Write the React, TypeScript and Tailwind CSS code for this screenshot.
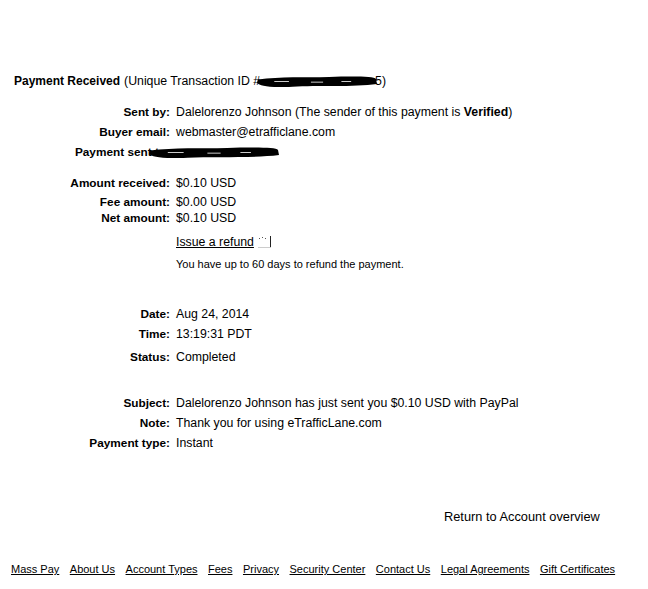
import React from 'react';

// black marker strokes that hide private data
const Scribble: React.FC<{ w: number; h: number; className?: string }> = ({ w, h, className }) => (
  <svg width={w} height={h} viewBox={`0 0 ${w} ${h}`} className={className}>
    <path
      d={`M2 ${h * 0.35} C ${w * 0.2} ${h * 0.1}, ${w * 0.4} ${h * 0.2}, ${w * 0.6} ${h * 0.15} S ${w - 4} ${h * 0.1}, ${w - 2} ${h * 0.3} L ${w - 1} ${h * 0.7} C ${w * 0.8} ${h * 0.95}, ${w * 0.5} ${h * 0.8}, ${w * 0.3} ${h * 0.9} S 4 ${h * 0.85}, 1 ${h * 0.6} Z`}
      fill="#000"
    />
    <path d={`M${w * 0.15} ${h * 0.5} h${w * 0.12} M${w * 0.45} ${h * 0.55} h${w * 0.1} M${w * 0.7} ${h * 0.5} h${w * 0.08}`} stroke="#fff" strokeWidth="0.8" />
  </svg>
);

const Row: React.FC<{ label: string; className?: string; children?: React.ReactNode }> = ({ label, className = '', children }) => (
  <div className={`flex h-[16px] leading-[16px] ${className}`}>
    <div className="w-[170px] shrink-0 text-right font-bold text-[11.8px]">{label}</div>
    <div className="pl-[6px] whitespace-nowrap">{children}</div>
  </div>
);

const links = ['Mass Pay', 'About Us', 'Account Types', 'Fees', 'Privacy', 'Security Center', 'Contact Us', 'Legal Agreements', 'Gift Certificates'];

export default function App() {
  return (
    <div className="w-[648px] h-[589px] bg-white text-black text-[12.3px] overflow-hidden" style={{ fontFamily: '"Liberation Sans", Arial, sans-serif' }}>
      <div className="pt-[73px]">
        {/* heading */}
        <div className="h-[16px] leading-[16px] pl-[14px] whitespace-nowrap flex items-center">
          <span className="font-bold text-[12px]">Payment Received</span>
          <span className="ml-[4px]">(Unique Transaction ID #</span>
          <Scribble w={122} h={13} className="-ml-[4px] shrink-0" />
          <span className="-ml-[3px]">5)</span>
        </div>

        <Row label="Sent by:" className="mt-[15px]">
          Dalelorenzo Johnson (The sender of this payment is <span className="font-bold">Verified</span>)
        </Row>
        <Row label="Buyer email:" className="mt-[4px]">webmaster@etrafficlane.com</Row>
        <div className="relative mt-[4px]">
          <Row label="Payment sent to:" />
          <Scribble w={132} h={13} className="absolute left-[148px] top-[2px]" />
        </div>

        <Row label="Amount received:" className="mt-[15px]">$0.10 USD</Row>
        <Row label="Fee amount:" className="mt-[3px]">$0.00 USD</Row>
        <Row label="Net amount:">$0.10 USD</Row>

        <div className="mt-[8px] h-[16px] leading-[16px] pl-[176px] flex items-center">
          <span className="underline">Issue a refund</span>
          <svg width="14" height="14" viewBox="0 0 14 14" className="ml-[4px]">
            <rect x="1" y="3" width="1" height="1" fill="#555" />
            <rect x="4" y="2" width="1" height="1" fill="#555" />
            <rect x="7" y="3" width="1" height="1" fill="#555" />
            <rect x="12" y="1" width="1" height="12" fill="#222" />
            <rect x="0" y="12" width="13" height="1" fill="#ccc" />
          </svg>
        </div>
        <div className="mt-[6px] h-[16px] leading-[16px] pl-[176px] text-[11px]">You have up to 60 days to refund the payment.</div>

        <Row label="Date:" className="mt-[34px]">Aug 24, 2014</Row>
        <Row label="Time:" className="mt-[4px]">13:19:31 PDT</Row>
        <Row label="Status:" className="mt-[7px]">Completed</Row>

        <Row label="Subject:" className="mt-[30px]">Dalelorenzo Johnson has just sent you $0.10 USD with PayPal</Row>
        <Row label="Note:" className="mt-[4px]">Thank you for using eTrafficLane.com</Row>
        <Row label="Payment type:" className="mt-[4px]">Instant</Row>

        <div className="mt-[58px] h-[16px] leading-[16px] pl-[444px] text-[12.8px]">Return to Account overview</div>

        <div className="mt-[36px] h-[16px] leading-[16px] pl-[11px] flex gap-[10.5px] text-[11px] whitespace-nowrap">
          {links.map((l) => (
            <span key={l} className="underline">{l}</span>
          ))}
        </div>
      </div>
    </div>
  );
}
